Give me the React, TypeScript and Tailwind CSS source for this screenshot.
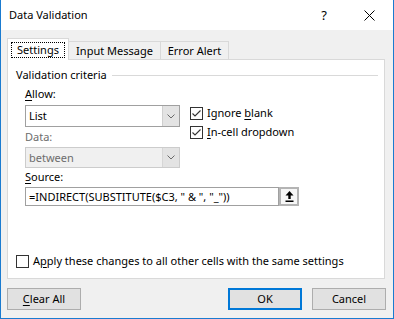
import React from "react";

function Check({ checked }: { checked?: boolean }) {
  return (
    <span className="w-[13px] h-[13px] border border-[#333333] bg-white flex items-center justify-center shrink-0">
      {checked && (
        <svg width="11" height="11" viewBox="0 0 11 11">
          <path d="M1.5 5.5 L4 8 L9.5 2.5" fill="none" stroke="#333333" strokeWidth="1.1" />
        </svg>
      )}
    </span>
  );
}

function Chevron() {
  return (
    <svg width="8" height="5" viewBox="0 0 8 5">
      <path d="M0.5 0.5 L4 4 L7.5 0.5" fill="none" stroke="#6a6a6a" strokeWidth="1" />
    </svg>
  );
}

function U({ children }: { children: React.ReactNode }) {
  return <span className="underline underline-offset-[2px] decoration-[1px]">{children}</span>;
}

export default function App() {
  return (
    <div className="w-[394px] h-[319px] flex flex-col font-['Noto_Sans',sans-serif] text-[11px] leading-[16px] text-black select-none">
      {/* Title bar */}
      <div className="h-[30px] bg-white flex items-center shrink-0 border-x border-[#1a7bd0] text-[11px]">
        <span className="ml-[8px]">Data Validation</span>
        <span className="ml-auto mr-[37px] text-[13px]">?</span>
        <svg className="mr-[18px]" width="11" height="11" viewBox="0 0 11 11">
          <path d="M0.5 0.5 L10.5 10.5 M10.5 0.5 L0.5 10.5" stroke="#000" strokeWidth="1" />
        </svg>
      </div>

      {/* Body */}
      <div className="flex-1 bg-[#f0f0f0] border-x border-b border-[#1a7bd0] flex flex-col pl-[6px] pt-[8px]">
        {/* Tabs */}
        <div className="flex items-end h-[21px]">
          <div className="relative z-10 -mb-px h-[22px] w-[62px] bg-white border border-b-0 border-[#d9d9d9] flex items-start justify-center pt-[3px]">
            <span className="border border-dotted border-black px-[5px] leading-[14px]">Settings</span>
          </div>
          <div className="h-[18px] w-[92px] border-t border-r border-[#d9d9d9] flex items-center justify-center">
            Input Message
          </div>
          <div className="h-[18px] w-[68px] border-t border-r border-[#d9d9d9] flex items-center justify-center">
            Error Alert
          </div>
        </div>

        {/* Panel */}
        <div className="w-[378px] h-[220px] bg-white border border-[#d9d9d9] flex flex-col">
          <div className="mt-[7px] h-[16px] flex items-center pl-[8px] pr-[6px]">
            <span>Validation criteria</span>
            <span className="flex-1 ml-[5px] border-t border-[#d9d9d9]" />
          </div>

          <div className="pl-[17px] flex">
            <div className="w-[155px] flex flex-col">
              <div className="mt-[3px] h-[16px]">
                <U>A</U>llow:
              </div>
              <div className="mt-[3px] h-[22px] border border-[#a0a0a0] bg-white flex">
                <span className="flex-1 pl-[3px] flex items-center">List</span>
                <span className="w-[17px] bg-[#e3e3e3] border-l border-[#cfcfcf] flex items-center justify-center">
                  <Chevron />
                </span>
              </div>
              <div className="mt-[2px] h-[16px] text-[#6d6d6d]">Data:</div>
              <div className="mt-[2px] h-[21px] border border-[#cccccc] bg-[#f0f0f0] flex text-[#6d6d6d]">
                <span className="flex-1 pl-[3px] flex items-center">between</span>
                <span className="w-[17px] bg-[#e3e3e3] border-l border-[#d6d6d6] flex items-center justify-center">
                  <Chevron />
                </span>
              </div>
            </div>
            <div className="ml-[10px] mt-[22px] flex flex-col">
              <div className="h-[16px] flex items-center">
                <Check checked />
                <span className="ml-[4px]">
                  Ignore <U>b</U>lank
                </span>
              </div>
              <div className="mt-[3px] h-[16px] flex items-center">
                <Check checked />
                <span className="ml-[4px]">
                  <U>I</U>n-cell dropdown
                </span>
              </div>
            </div>
          </div>

          <div className="pl-[17px] flex flex-col">
            <div className="mt-[1px] h-[16px]">
              <U>S</U>ource:
            </div>
            <div className="mt-[2px] flex">
              <div className="w-[254px] h-[19px] border border-[#a0a0a0] bg-white flex items-center pl-[3px] whitespace-pre">
                =INDIRECT(SUBSTITUTE($C3, " &amp; ", "_"))
              </div>
              <div className="w-[20px] h-[19px] border-2 border-[#b4b4b4] bg-[#f7f7f7] flex items-center justify-center">
                <svg width="9" height="11" viewBox="0 0 9 11">
                  <path d="M4.5 0 L0.5 4.5 L8.5 4.5 Z" fill="#000" />
                  <rect x="3.3" y="4" width="2.4" height="4" fill="#000" />
                  <rect x="0.5" y="9.5" width="8" height="1.5" fill="#000" />
                </svg>
              </div>
            </div>
          </div>

          <div className="mt-auto mb-[9px] pl-[8px] h-[16px] flex items-center">
            <Check />
            <span className="ml-[4px]">
              A<U>p</U>ply these changes to all other cells with the same settings
            </span>
          </div>
        </div>

        {/* Buttons */}
        <div className="mt-[9px] flex pr-[7px]">
          <button className="w-[74px] h-[22px] bg-[#e1e1e1] border border-[#adadad] flex items-center justify-center">
            <U>C</U>lear All
          </button>
          <button className="ml-auto w-[74px] h-[22px] bg-[#e1e1e1] border-2 border-[#0078d7] flex items-center justify-center">
            OK
          </button>
          <button className="ml-[10px] w-[74px] h-[22px] bg-[#e1e1e1] border border-[#adadad] flex items-center justify-center">
            Cancel
          </button>
        </div>
      </div>
    </div>
  );
}
